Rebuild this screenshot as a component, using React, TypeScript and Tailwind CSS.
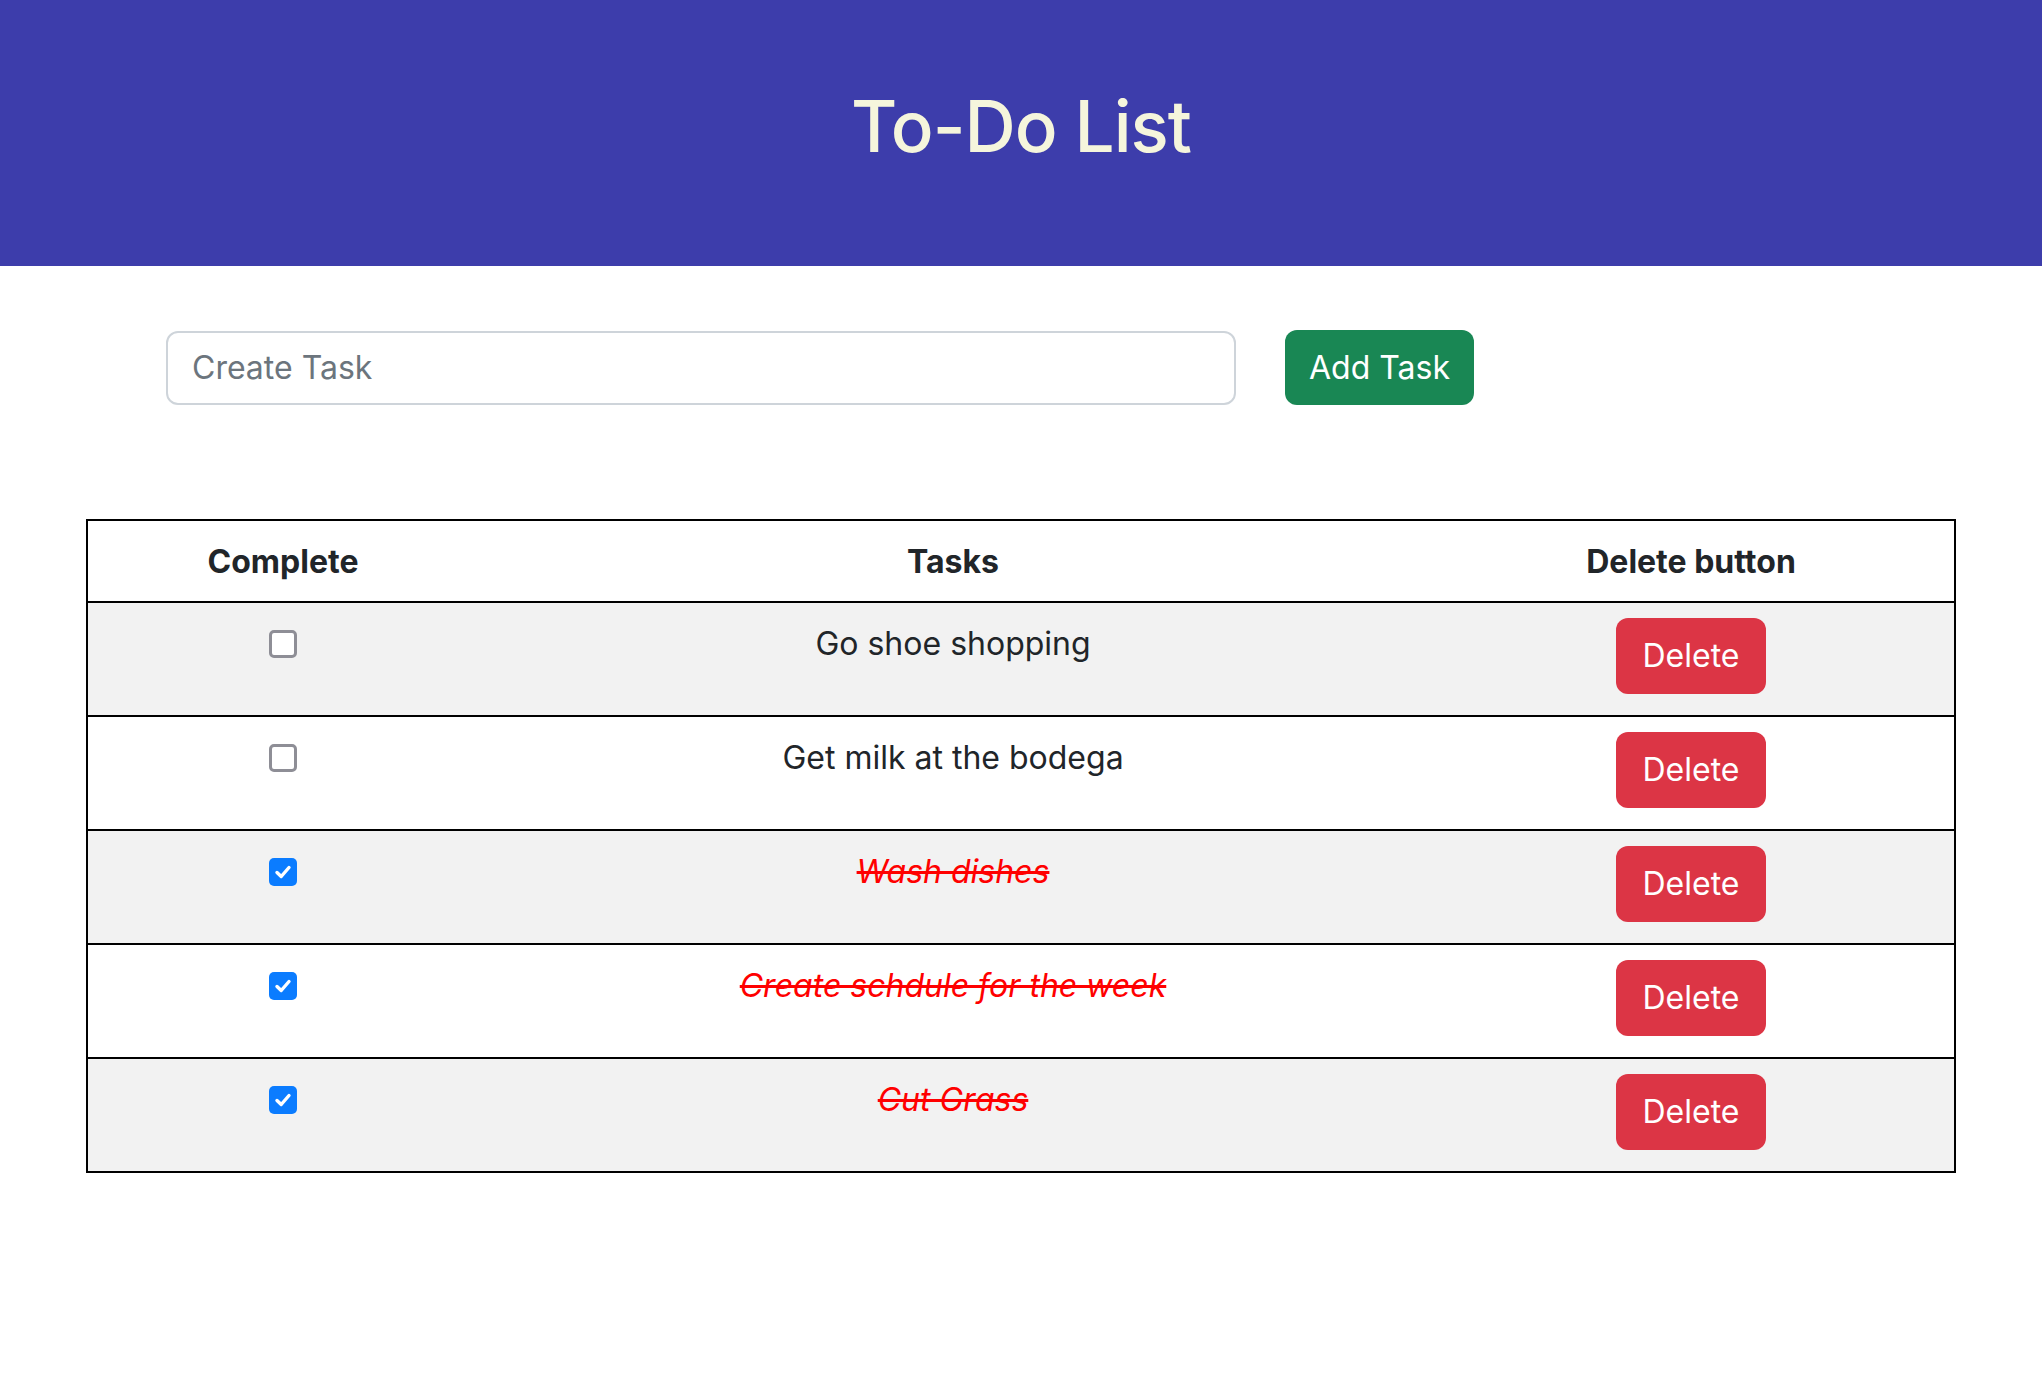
import React from "react";

type Task = { text: string; done: boolean };

const tasks: Task[] = [
  { text: "Go shoe shopping", done: false },
  { text: "Get milk at the bodega", done: false },
  { text: "Wash dishes", done: true },
  { text: "Create schdule for the week", done: true },
  { text: "Cut Grass", done: true },
];

function Box({ checked }: { checked: boolean }) {
  if (checked) {
    return (
      <span className="flex h-[28px] w-[28px] items-center justify-center rounded-[5px] bg-[#0b7cff]">
        <svg width="20" height="20" viewBox="0 0 20 20" fill="none">
          <path d="M4 10.5 L8.2 14.5 L16 5.5" stroke="white" strokeWidth="3.4" strokeLinecap="round" strokeLinejoin="round" />
        </svg>
      </span>
    );
  }
  return <span className="block h-[28px] w-[28px] rounded-[5px] border-[3px] border-[#8e8e96] bg-white" />;
}

export default function App() {
  return (
    <div className="min-h-[1386px] w-full bg-white text-[#212529] font-['Inter','Noto_Sans',sans-serif]">
      <header className="h-[266px] bg-[#3d3dab] pt-[81px]">
        <h1 className="text-center text-[71px] leading-[90px] font-medium text-[#f5f5dc] tracking-[-1px]">To-Do List</h1>
      </header>

      <div className="mt-[64px] flex items-center pl-[166px]">
        <div className="flex h-[74px] w-[1070px] items-center rounded-[12px] border-2 border-[#ced4da] px-[24px] text-[32px] text-[#6c757d]">
          Create Task
        </div>
        <button className="ml-[49px] flex h-[75px] w-[189px] items-center justify-center rounded-[12px] bg-[#198754] text-[32px] text-white">
          Add Task
        </button>
      </div>

      <div className="ml-[86px] mt-[114px] w-[1870px] border-2 border-black">
        <div className="grid grid-cols-[390px_950px_1fr] pt-[17px] pb-[15px] text-[32px] leading-[48px] font-bold">
          <div className="text-center">Complete</div>
          <div className="text-center">Tasks</div>
          <div className="text-center">Delete button</div>
        </div>
        {tasks.map((t, i) => (
          <div
            key={i}
            className={`grid h-[114px] grid-cols-[390px_950px_1fr] border-t-2 border-black ${i % 2 === 0 ? "bg-[#f2f2f2]" : "bg-white"}`}
          >
            <div className="flex justify-center pt-[27px]">
              <Box checked={t.done} />
            </div>
            <div className="pt-[17px] text-center text-[32px] leading-[48px]">
              {t.done ? (
                <span className="italic text-[#ff0000] line-through">{t.text}</span>
              ) : (
                <span>{t.text}</span>
              )}
            </div>
            <div className="flex justify-center pt-[15px]">
              <button className="flex h-[76px] w-[150px] items-center justify-center rounded-[12px] bg-[#dc3545] text-[32px] text-white">
                Delete
              </button>
            </div>
          </div>
        ))}
      </div>
    </div>
  );
}
